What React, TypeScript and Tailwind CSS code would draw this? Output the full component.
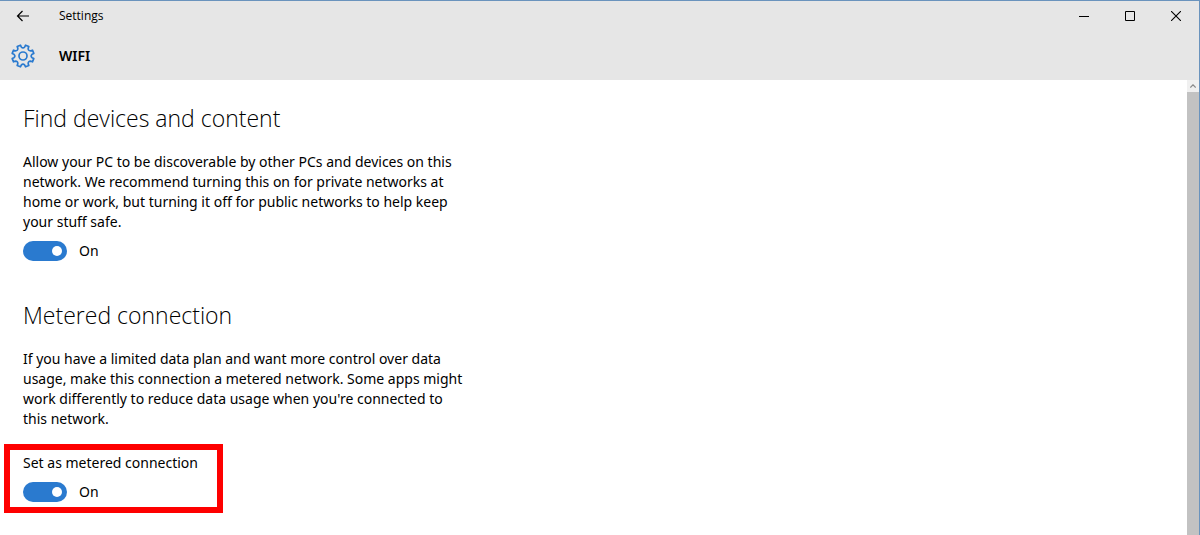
import { useState } from "react";

function gearPath(teeth: number, outer: number, inner: number) {
  const step = (Math.PI * 2) / teeth;
  const at = (radius: number, angle: number) =>
    `${(12 + radius * Math.cos(angle)).toFixed(2)} ${(12 + radius * Math.sin(angle)).toFixed(2)}`;
  let d = "";
  for (let i = 0; i < teeth; i++) {
    const a = (i + 0.5) * step;
    d += `${i === 0 ? "M" : "L"}${at(outer, a - step * 0.2)}L${at(outer, a + step * 0.2)}`;
    d += `L${at(inner + 0.6, a + step * 0.26)}Q${at(inner - 1.4, a + step * 0.5)} ${at(inner + 0.6, a + step * 0.74)}`;
  }
  return d + "Z";
}

function GearIcon() {
  return (
    <svg className="size-6" viewBox="0 0 24 24" fill="none" stroke="#2a7acf" strokeWidth="1.7" strokeLinejoin="round" aria-hidden="true">
      <path d={gearPath(8, 11.1, 8.6)} />
      <circle cx="12" cy="12" r="4" />
    </svg>
  );
}

function Toggle({ id, label }: { id: string; label: string }) {
  const [on, setOn] = useState(true);
  return (
    <label htmlFor={id} className="flex h-5 w-fit items-center gap-3">
      <input
        id={id}
        type="checkbox"
        role="switch"
        aria-label={label}
        checked={on}
        onChange={(e) => setOn(e.target.checked)}
        className="flex h-5 w-11 appearance-none items-center rounded-full bg-gray-400 px-[5px] before:size-[10px] before:rounded-full before:bg-white checked:justify-end checked:bg-[#2a7acf]"
      />
      <span>{on ? "On" : "Off"}</span>
    </label>
  );
}

export default function App() {
  return (
    <div className="flex h-screen flex-col overflow-hidden border-t border-r border-[#6a93bd] bg-white font-['Noto_Sans','Open_Sans',sans-serif] text-sm leading-5 text-black">
      <header className="shrink-0 bg-[#e6e6e6]">
        <div className="flex h-[30px] items-center">
          <button aria-label="Back" className="flex h-full w-[46px] items-center justify-center">
            <svg className="h-3 w-[14px]" viewBox="0 0 14 12" fill="none" stroke="currentColor" strokeWidth="1.2" aria-hidden="true">
              <path d="M13 6H1.5M6.5 1L1.5 6L6.5 11" />
            </svg>
          </button>
          <span className="ml-[13px] flex-1 font-['Open_Sans',sans-serif] text-xs">Settings</span>
          <button aria-label="Minimize" className="flex h-full w-[46px] items-center justify-center">
            <svg className="size-[10px]" viewBox="0 0 10 10" stroke="currentColor" aria-hidden="true"><path d="M0 5.5H10" /></svg>
          </button>
          <button aria-label="Maximize" className="flex h-full w-[46px] items-center justify-center">
            <svg className="size-[10px]" viewBox="0 0 10 10" fill="none" stroke="currentColor" aria-hidden="true"><path d="M.5 .5H9.5V9.5H.5Z" /></svg>
          </button>
          <button aria-label="Close" className="flex h-full w-[46px] items-center justify-center">
            <svg className="size-[10px]" viewBox="0 0 10 10" stroke="currentColor" strokeWidth="1.1" aria-hidden="true"><path d="M0 0L10 10M10 0L0 10" /></svg>
          </button>
        </div>
        <div className="flex h-[49px] items-center gap-6 pt-px pl-[11px]">
          <GearIcon />
          <h1 className="font-semibold">WIFI</h1>
        </div>
      </header>

      <div className="flex min-h-0 flex-1">
        <main className="min-w-0 flex-1 overflow-hidden px-[23px] pt-[22px]">
          <section>
            <h2 className="font-['Open_Sans',sans-serif] text-[23px] leading-8 font-light">Find devices and content</h2>
            <p className="mt-[18px] mb-[9px]">
              Allow your PC to be discoverable by other PCs and devices on this
              <br />
              network. We recommend turning this on for private networks at
              <br />
              home or work, but turning it off for public networks to help keep
              <br />
              your stuff safe.
            </p>
            <Toggle id="discoverable" label="Find devices and content" />
          </section>
          <section className="mt-[38px]">
            <h2 className="font-['Open_Sans',sans-serif] text-[23px] leading-8 font-light">Metered connection</h2>
            <p className="mt-[18px]">
              If you have a limited data plan and want more control over data
              <br />
              usage, make this connection a metered network. Some apps might
              <br />
              work differently to reduce data usage when you're connected to
              <br />
              this network.
            </p>
            <div className="mt-[15px] -ml-[19px] w-[219px] border-6 border-[#fe0000] pt-[3px] pb-[5px] pl-[13px]">
              <h3 className="mb-[9px]">Set as metered connection</h3>
              <Toggle id="metered" label="Set as metered connection" />
            </div>
          </section>
        </main>
        <div className="flex w-3 shrink-0 flex-col bg-[#c2c2c2]">
          <button aria-label="Scroll up" className="flex h-3 items-center justify-center bg-[#f0f0f0]">
            <svg className="h-1 w-[6px]" viewBox="0 0 6 4" fill="none" stroke="#8a8a8a" strokeWidth="1.2" aria-hidden="true"><path d="M.3 3.5L3 .8L5.7 3.5" /></svg>
          </button>
        </div>
      </div>
    </div>
  );
}
